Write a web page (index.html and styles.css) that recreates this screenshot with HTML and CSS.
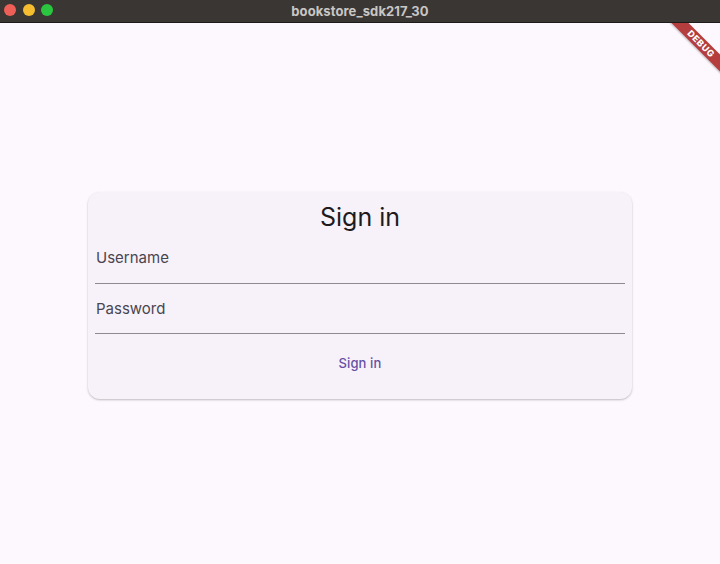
FILE: index.html
```html
<!DOCTYPE html>
<html>
<head>
<meta charset="utf-8">
<link rel="stylesheet" href="styles.css">
</head>
<body>
<div class="titlebar">
  <div class="lights">
    <span class="light red"></span>
    <span class="light yellow"></span>
    <span class="light green"></span>
  </div>
  <div class="title">bookstore_sdk217_30</div>
</div>
<main class="content">
  <div class="debug"><span>DEBUG</span></div>
  <div class="card">
    <h1 class="card-title">Sign in</h1>
    <div class="field"><span class="label">Username</span></div>
    <div class="field"><span class="label">Password</span></div>
    <div class="actions"><button class="btn">Sign in</button></div>
  </div>
</main>
</body>
</html>
```
FILE: styles.css
```css
html, body {
  margin: 0;
  padding: 0;
  width: 720px;
  height: 564px;
  overflow: hidden;
  background: #fdf7fe;
  font-family: Inter, "Noto Sans", sans-serif;
}
.titlebar {
  height: 23px;
  background: #3a3634;
  position: relative;
  display: flex;
  align-items: center;
  justify-content: center;
  border-bottom: 1px solid #1e1c1b;
  box-sizing: border-box;
}
.lights {
  position: absolute;
  left: 4px;
  top: 4px;
  display: flex;
  gap: 6.5px;
}
.light {
  width: 12px;
  height: 12px;
  border-radius: 50%;
  display: block;
}
.red { background: #ee5f57; }
.yellow { background: #f5bd2f; }
.green { background: #2bc63f; }
.title {
  color: #c9c6c4;
  font-size: 13px;
  font-weight: 700;
  letter-spacing: 0.1px;
}
.content {
  position: relative;
  height: 541px;
  overflow: hidden;
  display: flex;
  flex-direction: column;
  align-items: center;
  padding-top: 169px;
  box-sizing: border-box;
}
.debug {
  position: absolute;
  right: -41px;
  top: 15px;
  width: 120px;
  height: 12px;
  background: #b53d3d;
  transform: rotate(45deg);
  display: flex;
  align-items: center;
  justify-content: center;
  box-shadow: 0 1px 2px rgba(0,0,0,0.25);
}
.debug span {
  color: #fff;
  font-size: 9px;
  font-weight: 800;
  letter-spacing: 0.6px;
  line-height: 12px;
}
.card {
  width: 544px;
  height: 207px;
  box-sizing: border-box;
  background: #f7f2fa;
  border-radius: 12px;
  box-shadow: 0 1px 2px rgba(0,0,0,0.18), 0 1px 3px rgba(0,0,0,0.08);
  padding: 9px 7px 0 7px;
  display: flex;
  flex-direction: column;
}
.card-title {
  margin: 0;
  text-align: center;
  font-size: 25px;
  font-weight: 400;
  line-height: 32px;
  color: #1d1b20;
}
.field {
  height: 50px;
  border-bottom: 1px solid #8e8a92;
  box-sizing: border-box;
  display: flex;
  align-items: flex-start;
  padding-left: 1px;
}
.field:first-of-type {
  height: 51px;
}
.label {
  font-size: 15px;
  color: #49454f;
  line-height: 20px;
  margin-top: 15px;
  letter-spacing: 0;
}
.actions {
  display: flex;
  justify-content: center;
  padding-top: 19px;
}
.btn {
  background: none;
  border: none;
  font-family: Inter, "Noto Sans", sans-serif;
  font-size: 13px;
  font-weight: 500;
  color: #6750a4;
  padding: 0;
  line-height: 20px;
  letter-spacing: 0.1px;
}
```
